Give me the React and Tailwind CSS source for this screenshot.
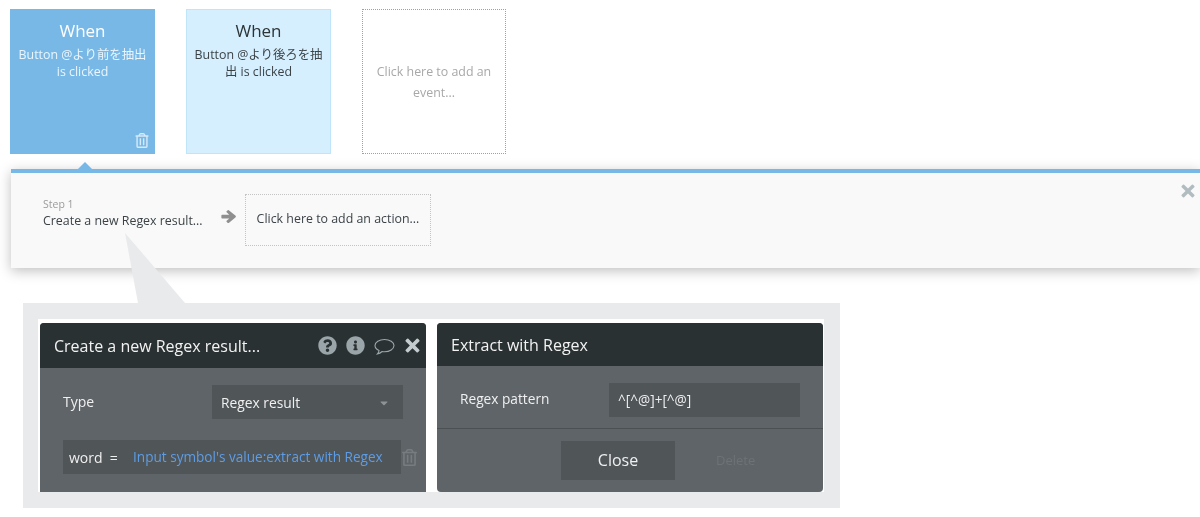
import React from "react";
import { FaQuestionCircle, FaInfoCircle, FaRegTrashAlt, FaCaretDown } from "react-icons/fa";

const font = { fontFamily: '"Open Sans","Noto Sans CJK JP",sans-serif' };

function Bubble() {
  return (
    <svg width="21" height="18" viewBox="0 0 21 18" fill="none" stroke="#9aa5aa" strokeWidth="1.1">
      <path d="M10.5 1.5C5.3 1.5 1 4.2 1 7.6c0 2.1 1.6 3.900 4 5-.2 1.200-.8 2.500-1.600 3.300 1.700-.2 3.500-1.200 4.700-2.400.8.1 1.600.2 2.400.2 5.200 0 9.500-2.700 9.500-6.100S15.700 1.500 10.500 1.500z" />
    </svg>
  );
}

function ThickX({ className }) {
  return (
    <svg className={className} viewBox="0 0 16 16" fill="currentColor">
      <path d="M3.600.8 8 5.200 12.400.8a1 1 0 0 1 1.400 0l1.400 1.400a1 1 0 0 1 0 1.400L10.800 8l4.400 4.400a1 1 0 0 1 0 1.400l-1.400 1.400a1 1 0 0 1-1.400 0L8 10.800l-4.400 4.400a1 1 0 0 1-1.400 0L.8 13.800a1 1 0 0 1 0-1.400L5.200 8 .8 3.600a1 1 0 0 1 0-1.400L2.200.8a1 1 0 0 1 1.400 0z" />
    </svg>
  );
}

function ThickArrow({ className }) {
  return (
    <svg className={className} viewBox="0 0 16 16" fill="currentColor">
      <path d="M8.300 1.200 15.300 7a1.300 1.300 0 0 1 0 2l-7 5.800a.8.800 0 0 1-1.100 0L6 13.600a.8.800 0 0 1 0-1.100L8.800 10H1.200A.8.800 0 0 1 .4 9.200V6.800A.8.800 0 0 1 1.200 6h7.600L6 3.500a.8.800 0 0 1 0-1.100l1.200-1.200a.8.800 0 0 1 1.100 0z" />
    </svg>
  );
}

function EventCard({ kind, children, title }) {
  const base = "w-[145px] h-[145px] shrink-0 relative text-center whitespace-nowrap";
  if (kind === "active")
    return (
      <div className={`${base} bg-[#78b8e7] text-white pt-[10px]`}>
        <div className="text-[17px] leading-[24px]">{title}</div>
        <div className="text-[12.400px] leading-[17px] mt-[3px] text-[#eaf5fc]">{children}</div>
        <FaRegTrashAlt className="absolute right-[6px] bottom-[6px] text-[#d5e9f7] w-[14px] h-[15px]" />
      </div>
    );
  return (
    <div className={`${base} bg-[#d5effe] border border-[#bfe5fb] text-[#2d3436] pt-[9px]`}>
      <div className="text-[17px] leading-[24px]">{title}</div>
      <div className="text-[12.400px] leading-[17px] mt-[3px] text-[#3c4347]">{children}</div>
    </div>
  );
}

export default function App() {
  return (
    <div style={font} className="relative w-[1200px] h-[517px] overflow-hidden bg-white blur-[0.4px]">
      <div className="flex gap-[31px] pl-[10px] pt-[9px]">
        <EventCard kind="active" title="When">Button @より前を抽出<br />is clicked</EventCard>
        <EventCard title="When">Button @より後ろを抽<br />出 is clicked</EventCard>
        <div className="w-[144px] h-[145px] shrink-0 border border-dotted border-[#a0a0a0] flex items-center justify-center text-center text-[12.400px] leading-[21px] text-[#a8a8a8] whitespace-nowrap">
          <span>Click here to add an<br />event...</span>
        </div>
      </div>

      <div className="relative ml-[11px] mt-[15px] h-[99px] border-t-[4px] border-[#78b8e7] bg-[#f9f9f9] shadow-[0_3px_12px_rgba(0,0,0,0.25)] flex items-start pl-[32px] pt-[21px]">
        <div className="absolute left-[67px] top-[-11px] w-0 h-0 border-x-[7px] border-x-transparent border-b-[7px] border-b-[#78b8e7]" />
        <div className="w-[179px] pt-[3px]">
          <div className="text-[10.500px] leading-[14px] text-[#9b9b9b]">Step 1</div>
          <div className="text-[12.400px] leading-[20px] text-[#3c4347] whitespace-nowrap">Create a new Regex result...</div>
        </div>
        <ThickArrow className="text-[#8f8f8f] w-[15px] h-[15px] mt-[15px] -ml-[1px]" />
        <div className="ml-[9px] w-[186px] h-[52px] border border-dotted border-[#c4c4c4] flex items-center justify-center text-[12.400px] pb-[1px] text-[#3c4347] whitespace-nowrap">
          Click here to add an action...
        </div>
        <ThickX className="absolute right-[5px] top-[11px] text-[#b1bcc0] w-[14px] h-[14px]" />
      </div>

      <svg className="absolute left-[120px] top-[230px]" width="70" height="74" viewBox="0 0 70 74">
        <polygon points="5,3 18,73 65,73" fill="#e9eaec" />
      </svg>

      <div className="relative ml-[23px] mt-[35px] w-[817px] h-[205px] bg-[#e9eaec] pt-[16px] pl-[15px]">
        <div className="w-[786px] h-[173px] bg-white pl-[2px] pt-[4px] flex gap-[11px]">
          <div className="w-[386px] h-[169px] rounded-t-[4px] overflow-hidden bg-[#5f6468] flex flex-col">
            <div className="h-[45px] shrink-0 bg-[#2a3133] flex items-center pl-[14px] pr-[6px] text-white">
              <span className="text-[16px] flex-1 whitespace-nowrap text-[#f2f2f2]">Create a new Regex result...</span>
              <FaQuestionCircle className="text-[#9aa5aa] w-[19px] h-[19px] mr-[9px]" />
              <FaInfoCircle className="text-[#9aa5aa] w-[19px] h-[19px] mr-[9px]" />
              <span className="mr-[10px] mt-[2px]"><Bubble /></span>
              <ThickX className="text-[#c5cccf] w-[15px] h-[15px]" />
            </div>
            <div className="pl-[23px] pt-[17px]">
              <div className="flex items-center h-[34px]">
                <span className="w-[149px] text-[14px] text-[#f0f0f0] -mt-[1px]">Type</span>
                <div className="w-[191px] h-full bg-[#505558] flex items-center justify-between pl-[9px] pr-[13px] pt-[2px] text-[13.800px] text-[#f0f0f0]">
                  Regex result
                  <FaCaretDown className="text-[#8d9396] w-[12px] h-[12px]" />
                </div>
              </div>
              <div className="flex items-center mt-[21px]">
                <div className="w-[338px] h-[34px] bg-[#505558] flex items-center pl-[6px] text-[14px] whitespace-nowrap">
                  <span className="text-[#f0f0f0] w-[64px] shrink-0">word&nbsp; =</span>
                  <span className="text-[#5d9de6] text-[13.600px]">Input symbol's value:extract with Regex</span>
                </div>
                <FaRegTrashAlt className="ml-[1px] text-[#777c80] w-[15px] h-[17px]" />
              </div>
            </div>
          </div>

          <div className="w-[386px] h-[169px] rounded-[4px] overflow-hidden bg-[#5f6468] flex flex-col">
            <div className="h-[43px] shrink-0 bg-[#2a3133] flex items-center pl-[14px] pt-[1px] text-[16px] text-[#f2f2f2]">Extract with Regex</div>
            <div className="h-[63px] shrink-0 border-b border-[#4b5053] flex items-start pl-[23px] pt-[17px]">
              <span className="w-[149px] text-[13.700px] leading-[34px] text-[#f0f0f0] -mt-[1px]">Regex pattern</span>
              <div className="w-[191px] h-[34px] bg-[#505558] flex items-center pl-[9px] text-[13.600px] text-[#f0f0f0]">^[^@]+[^@]</div>
            </div>
            <div className="flex items-start pl-[124px] pt-[12px]">
              <div className="w-[114px] h-[39px] bg-[#505558] flex items-center justify-center pb-[1px] text-[16px] text-[#f0f0f0]">Close</div>
              <div className="w-[40px] ml-[41px] h-[39px] flex items-center text-[13px] text-[#6d7276]">Delete</div>
            </div>
          </div>
        </div>
      </div>
    </div>
  );
}
